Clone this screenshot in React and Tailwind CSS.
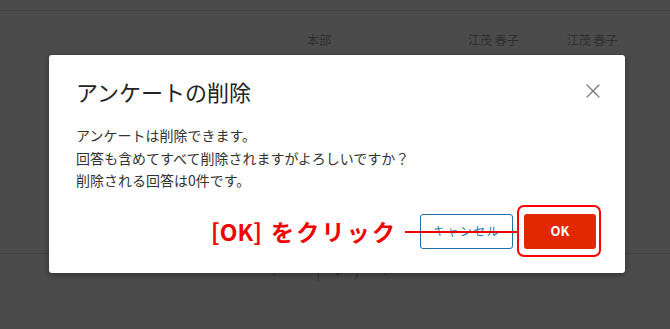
import { X } from "lucide-react";

const jp = { fontFamily: '"Noto Sans CJK JP", "Noto Sans", sans-serif' };

export default function App() {
  return (
    <div className="relative w-[670px] h-[329px] overflow-hidden bg-[#4b4b4b]" style={jp}>
      {/* background page (dimmed) */}
      <div className="h-[11px] border-b border-[#404040]" />
      <div className="flex items-center h-[58px] text-[12px] text-[#2f2f2f]">
        <span className="ml-[307px]">本部</span>
        <span className="ml-[137px]">江茂 春子</span>
        <span className="ml-[48px]">江茂 春子</span>
      </div>
      <div className="h-[185px] border-b border-[#404040]" />
      <div className="flex items-center gap-[14px] ml-[272px] mt-[10px] text-[#333] text-[14px] leading-none">
        <span>‹</span>
        <span className="ml-[26px]">|</span>
        <span>▾</span>
        <span>/</span>
        <span className="ml-[8px]">›</span>
      </div>

      {/* dialog */}
      <div className="absolute left-[49px] top-[55px] w-[576px] h-[218px] bg-white rounded-[3px] shadow-[0_2px_6px_rgba(0,0,0,0.35)] pl-[27px] pr-[20px] pt-[22px]">
        <div className="flex items-center justify-between h-[28px]">
          <h2 className="text-[22px] leading-[28px] text-[#222]">アンケートの削除</h2>
          <X className="w-[24px] h-[24px] text-[#7a7a7a]" strokeWidth={1.2} />
        </div>
        <div className="mt-[19px] text-[14px] leading-[22.5px] text-[#333]">
          <p>アンケートは削除できます。</p>
          <p>回答も含めてすべて削除されますがよろしいですか？</p>
          <p>削除される回答は0件です。</p>
        </div>
        <div className="flex justify-end gap-[11px] mt-[22px] pr-[9px]">
          <button className="w-[93px] h-[35px] border border-[#1f6fa8] rounded-[3px] text-[12px] tracking-[0.12em] text-[#2a78b4]">
            キャンセル
          </button>
          <button className="w-[72px] h-[35px] bg-[#e12800] rounded-[3px] text-[13px] font-bold text-white">
            OK
          </button>
        </div>
      </div>

      {/* annotation */}
      <div className="absolute left-[517px] top-[205px] w-[84px] h-[52px] border-2 border-[#ff0000] rounded-[7px]" />
      <div className="absolute left-[405px] top-[231px] w-[113px] h-[1.5px] bg-[#ee0000]" />
      <div className="absolute left-[211px] top-[216px] h-[30px] flex items-center text-[23px] font-bold text-[#f20000] leading-none">
        <span>[OK]</span>
        <span className="ml-[9px] tracking-[0.1em]">をクリック</span>
      </div>
    </div>
  );
}
